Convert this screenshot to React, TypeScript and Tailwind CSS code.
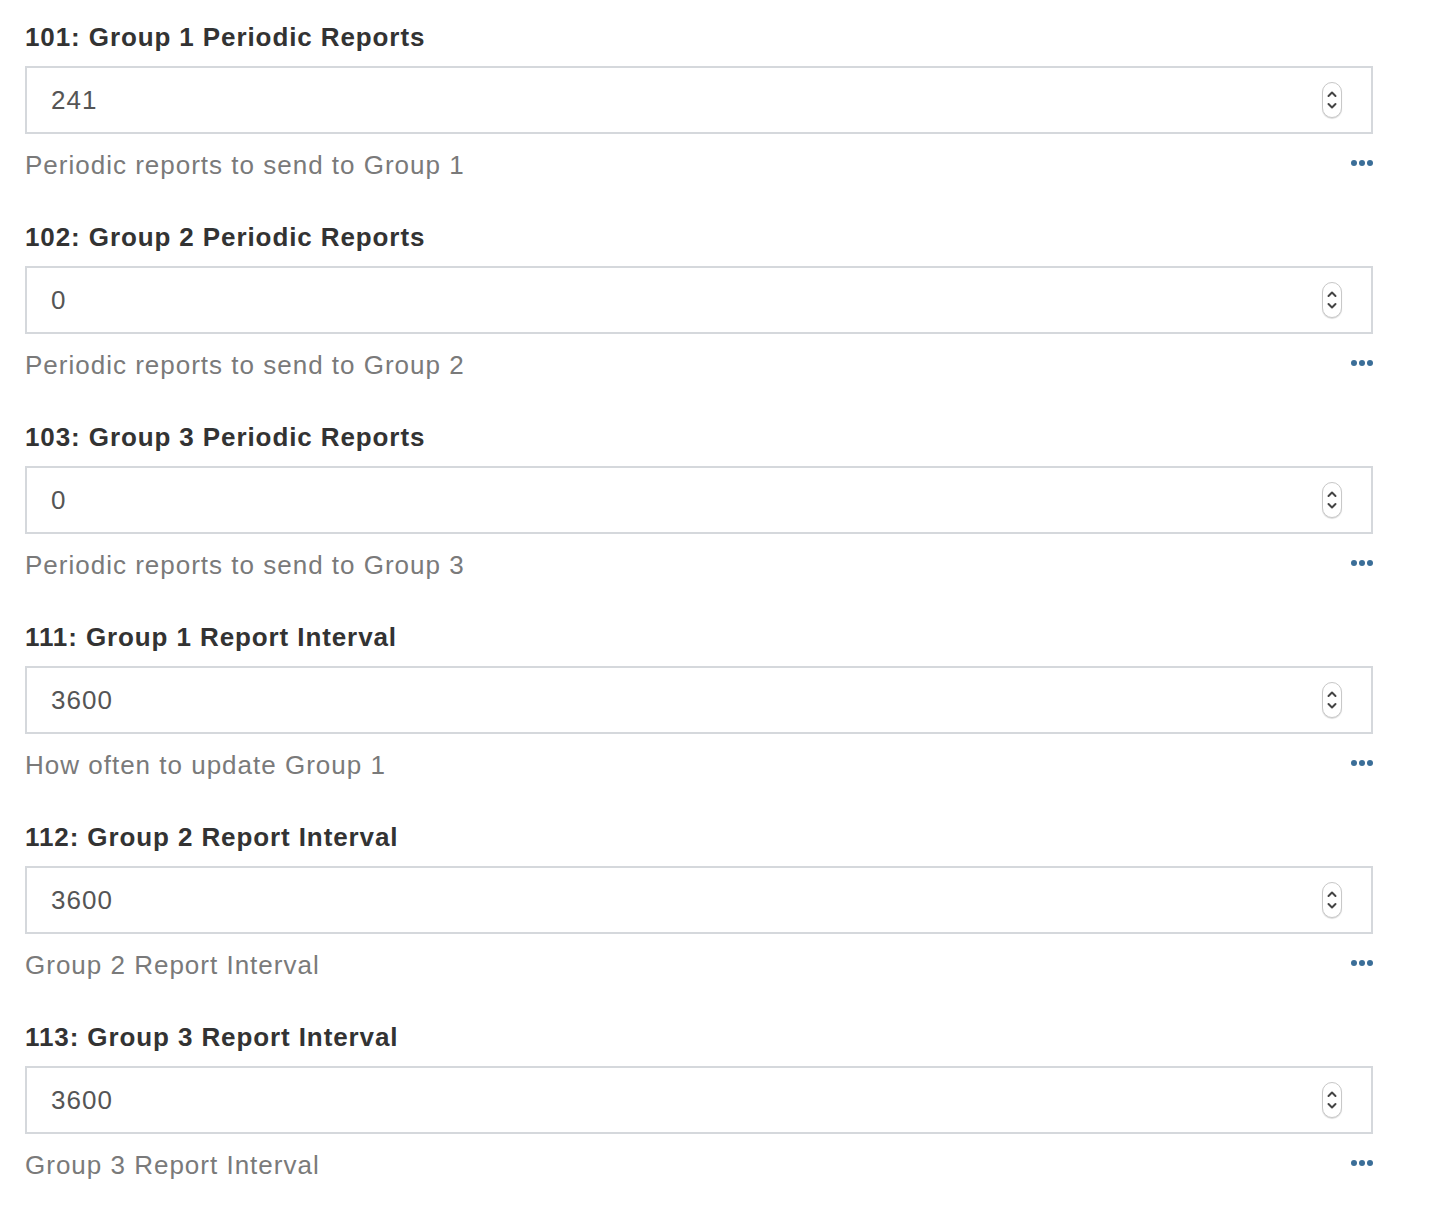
const FIELDS = [
  { label: "101: Group 1 Periodic Reports", value: "241", help: "Periodic reports to send to Group 1" },
  { label: "102: Group 2 Periodic Reports", value: "0", help: "Periodic reports to send to Group 2" },
  { label: "103: Group 3 Periodic Reports", value: "0", help: "Periodic reports to send to Group 3" },
  { label: "111: Group 1 Report Interval", value: "3600", help: "How often to update Group 1" },
  { label: "112: Group 2 Report Interval", value: "3600", help: "Group 2 Report Interval" },
  { label: "113: Group 3 Report Interval", value: "3600", help: "Group 3 Report Interval" },
];

function Spinner() {
  return (
    <div className="w-[20px] h-[36px] rounded-full border border-[#c8c8c8] bg-white shadow-[0_1px_1px_rgba(0,0,0,0.15)] flex items-center justify-center">
      <svg width="12" height="26" viewBox="0 0 12 26" fill="none" stroke="#444" strokeWidth="2" strokeLinecap="round" strokeLinejoin="round">
        <path d="M2.5 9 L6 5.5 L9.5 9" />
        <path d="M2.5 17 L6 20.5 L9.5 17" />
      </svg>
    </div>
  );
}

function Field({ label, value, help }: { label: string; value: string; help: string }) {
  return (
    <div className="mb-[42px]">
      <label className="block text-[26px] leading-[30px] font-bold tracking-[0.9px] text-[#333] mb-[14px]">{label}</label>
      <div className="h-[68px] border-2 border-[#d5d8dc] bg-white flex items-center pl-[24px] pr-[29px]">
        <span className="flex-1 text-[26px] tracking-[1px] text-[#555]">{value}</span>
        <Spinner />
      </div>
      <div className="mt-[16px] flex items-center justify-between h-[30px]">
        <span className="text-[26px] leading-[30px] tracking-[1px] text-[#7a7a7a]">{help}</span>
        <span className="flex gap-[2px] mb-[4px]">
          <span className="w-[6px] h-[6px] rounded-full bg-[#3b6e98]" />
          <span className="w-[6px] h-[6px] rounded-full bg-[#3b6e98]" />
          <span className="w-[6px] h-[6px] rounded-full bg-[#3b6e98]" />
        </span>
      </div>
    </div>
  );
}

export default function App() {
  return (
    <main className="min-h-screen bg-white pt-[22px] pl-[25px]" style={{ fontFamily: '"Liberation Sans", Arial, sans-serif' }}>
      <div className="w-[1348px]">
        {FIELDS.map((f) => (
          <Field key={f.label} {...f} />
        ))}
      </div>
    </main>
  );
}
